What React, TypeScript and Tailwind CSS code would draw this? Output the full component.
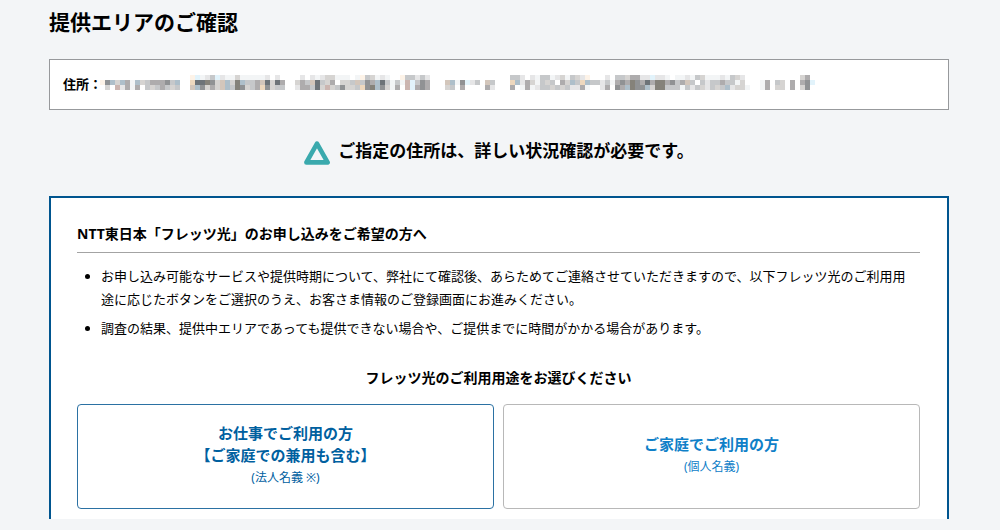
const PALETTE: Record<string, string> = {
  a: '#f3f5f6',
  b: '#e6e6e7',
  c: '#d6d4d2',
  d: '#c6c8ca',
  e: '#aeacad',
  f: '#909294',
  g: '#6d7378',
  h: '#fdf3e8',
  i: '#d3c6bb',
  j: '#aebfca',
  k: '#e2f3fb',
  l: '#cbb5b0',
  m: '#eed8be',
  n: '#85827a',
};

// Each run: [first column, top row, middle row, bottom row]
const RUNS: [number, string, string, string][] = [
  [0, '', 'hfjcjeajcdeeefdj', '.c.lbeae.dcdedcd'],
  [18, 'hkabdkbaacaaaaab.b.', 'mggnfcijcnjddeigcge', 'ijfcecijdnfcdemfcdd'],
  [39, '.b.babcc', 'cedigdce', 'beedgclc'],
  [47, 'aaa.ahdcaba..hddbdb', '.ccdidfejgdadalkdfe', 'dfccdmfnjfcae.lkefe'],
  [69, '', 'ijafkbd.id', 'cd.e....eb'],
  [82, 'ddb.baddabcadcb', 'mjbecadcd.ecjdm', 'e.aeabddcdcdbbe'],
  [97, 'h...b.ddceebbkbba.aabadcaaabadcb', 'jddbdaefenfegennefdeid.dbddeddac', 'a..be.fejnffjcnndddadbdcbdcdjbcca'],
  [132, '........ce', 'ae.dc.e.efk', 'ae.cc.e.cf'],
];

function MaskedAddress() {
  return (
    <svg className="mt-[15px] h-[15px] w-[720px] shrink-0" viewBox="0 0 720 15" shapeRendering="crispEdges" aria-hidden="true">
      {RUNS.flatMap(([start, ...rows]) =>
        rows.flatMap((row, y) =>
          row.split('').map((ch, x) =>
            ch === '.' ? null : (
              <rect key={`${start}-${y}-${x}`} x={(start + x) * 5} y={y * 5} width="5" height="5" fill={PALETTE[ch]} />
            ),
          ),
        ),
      )}
    </svg>
  );
}

export default function App() {
  return (
    <div className="min-h-screen bg-[#f3f5f7] font-['Noto_Sans','Noto_Sans_CJK_JP',sans-serif] text-black">
      <main className="pr-[51px] pb-3 pl-[49px]" lang="ja">
        <h1 className="pt-2 text-[21px] leading-7 font-bold">提供エリアのご確認</h1>

        <div className="mt-[23px] flex h-[51px] items-start overflow-hidden border border-[#97999c] bg-white px-[13px] text-[13px] leading-5">
          <span className="mt-[14px] -mr-[2px] shrink-0 font-bold">住所：</span>
          <MaskedAddress />
        </div>

        <p className="mt-[27px] flex items-center justify-center gap-2 text-[17px] leading-7 font-bold">
          <svg className="mt-1 h-6 w-[26px] shrink-0" viewBox="0 0 26 24" aria-hidden="true">
            <path d="M13 2.6 L23.6 21.4 H2.4 Z" fill="none" stroke="#3aa9ad" strokeWidth="4.6" strokeLinejoin="round" />
          </svg>
          ご指定の住所は、詳しい状況確認が必要です。
        </p>

        <section className="mt-[31px] border-x-2 border-t-2 border-[#00558f] bg-white pt-[25px] pr-[27px] pb-[10px] pl-[26px]">
          <h2 className="border-b border-[#a3a3a3] pb-[7px] text-sm leading-[22px] font-bold">
            NTT東日本「フレッツ光」のお申し込みをご希望の方へ
          </h2>
          <ul className="mt-3 list-disc space-y-[6px] pl-6 text-[13px] leading-[23px]">
            <li>
              お申し込み可能なサービスや提供時期について、弊社にて確認後、あらためてご連絡させていただきますので、以下フレッツ光のご利用用
              <br />
              途に応じたボタンをご選択のうえ、お客さま情報のご登録画面にお進みください。
            </li>
            <li>調査の結果、提供中エリアであっても提供できない場合や、ご提供までに時間がかかる場合があります。</li>
          </ul>

          <h3 className="mt-[27px] text-center text-sm leading-[22px] font-bold">フレッツ光のご利用用途をお選びください</h3>
          <div className="mt-[15px] grid grid-cols-2 gap-[9px]">
            <button
              type="button"
              className="flex h-[105px] flex-col items-center justify-center rounded border border-[#2b71a3] bg-white pb-[2px] text-[15px] leading-[22px] font-bold text-[#00609f]"
            >
              <span>お仕事でご利用の方</span>
              <span>【ご家庭での兼用も含む】</span>
              <span className="text-xs leading-6 font-normal">(法人名義 ※)</span>
            </button>
            <button
              type="button"
              className="flex h-[105px] flex-col items-center justify-center rounded border border-[#b8b8b8] bg-white pb-[2px] text-[15px] leading-[22px] font-bold text-[#0f80c8]"
            >
              <span>ご家庭でご利用の方</span>
              <span className="text-xs leading-6 font-normal">(個人名義)</span>
            </button>
          </div>
        </section>
      </main>
    </div>
  );
}
